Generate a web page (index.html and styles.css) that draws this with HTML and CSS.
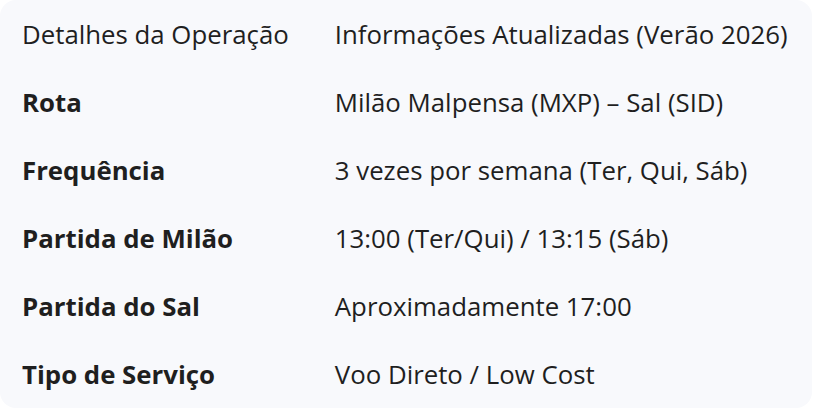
FILE: index.html
```html
<!DOCTYPE html>
<html lang="pt">
<head>
<meta charset="utf-8">
<link rel="stylesheet" href="styles.css">
</head>
<body>
<div class="card">
  <table class="ops">
    <thead>
      <tr><th>Detalhes da Operação</th><th>Informações Atualizadas (Verão 2026)</th></tr>
    </thead>
    <tbody>
      <tr><td class="label">Rota</td><td>Milão Malpensa (MXP) – Sal (SID)</td></tr>
      <tr><td class="label">Frequência</td><td>3 vezes por semana (Ter, Qui, Sáb)</td></tr>
      <tr><td class="label">Partida de Milão</td><td>13:00 (Ter/Qui) / 13:15 (Sáb)</td></tr>
      <tr><td class="label">Partida do Sal</td><td>Aproximadamente 17:00</td></tr>
      <tr><td class="label">Tipo de Serviço</td><td>Voo Direto / Low Cost</td></tr>
    </tbody>
  </table>
</div>
</body>
</html>
```
FILE: styles.css
```css
html, body {
  margin: 0;
  padding: 0;
  background: #ffffff;
}
.card {
  display: inline-block;
  background: #f8f9fc;
  border-radius: 16px;
  font-family: "Open Sans", "Noto Sans", sans-serif;
  color: #1f1f1f;
}
.ops {
  border-collapse: collapse;
  font-size: 25.8px;
  line-height: 37px;
}
.ops th,
.ops td {
  text-align: left;
  padding: 15.5px 24px 15.5px 22px;
  white-space: nowrap;
}
.ops th {
  font-weight: 400;
}
.ops td.label {
  font-weight: 700;
}
```
